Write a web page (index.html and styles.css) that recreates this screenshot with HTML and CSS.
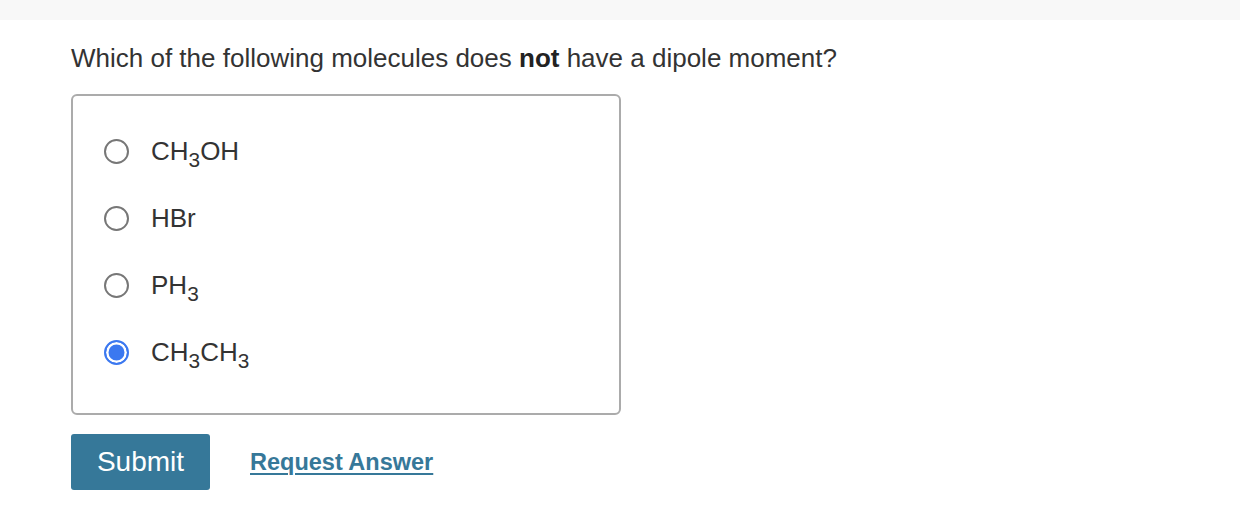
FILE: index.html
```html
<!DOCTYPE html>
<html>
<head>
<meta charset="utf-8">
<link rel="stylesheet" href="styles.css">
</head>
<body>
<div class="topbar"></div>
<main class="content">
  <p class="question">Which of the following molecules does <strong>not</strong> have a dipole moment?</p>
  <div class="choices">
    <label class="choice"><span class="radio"></span><span class="label">CH<sub>3</sub>OH</span></label>
    <label class="choice"><span class="radio"></span><span class="label">HBr</span></label>
    <label class="choice"><span class="radio"></span><span class="label">PH<sub>3</sub></span></label>
    <label class="choice"><span class="radio checked"></span><span class="label">CH<sub>3</sub>CH<sub>3</sub></span></label>
  </div>
  <div class="actions">
    <button class="submit">Submit</button>
    <a class="request" href="#">Request Answer</a>
  </div>
</main>
</body>
</html>
```
FILE: styles.css
```css
html, body { margin: 0; padding: 0; background: #fff; }
body { font-family: "Liberation Sans", Arial, sans-serif; color: #333; }
.topbar { height: 20px; background: #f8f8f8; }
.content { padding: 0 0 0 71px; }
.question { margin: 23px 0 0; font-size: 26px; line-height: 30px; color: #333; }
.question strong { font-weight: bold; color: #222; }
.choices {
  margin-top: 21px; width: 515px; border: 2px solid #ababab; border-radius: 6px;
  padding: 41px 0 46px 31px; display: flex; flex-direction: column; gap: 38px;
  box-sizing: content-box;
}
.choice { display: flex; align-items: center; gap: 22px; height: 29px; font-size: 26px; color: #333; }
.radio { width: 21px; height: 21px; border: 2px solid #777; border-radius: 50%; box-sizing: content-box; flex: none; }
.radio.checked { border-color: #3b78f0; background: #3b78f0; box-shadow: inset 0 0 0 2.5px #fff; }
.label sub { font-size: 0.8em; vertical-align: -0.35em; line-height: 0; }
.actions { margin-top: 19px; display: flex; align-items: center; gap: 40px; }
.submit {
  width: 139px; height: 56px; border: 0; border-radius: 3px; background: #367899; color: #fff;
  font-family: "Liberation Sans", Arial, sans-serif; font-size: 28px; padding: 0;
}
.request { color: #367899; font-weight: bold; font-size: 23.5px; text-decoration: underline; text-decoration-thickness: 2px; text-underline-offset: 3px; }
```
